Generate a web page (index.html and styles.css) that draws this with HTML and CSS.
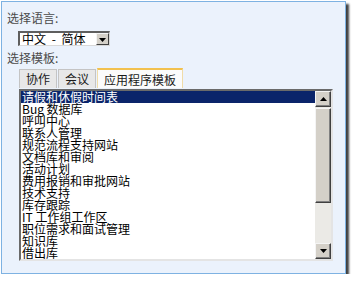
FILE: index.html
```html
<!DOCTYPE html>
<html>
<head>
<meta charset="utf-8">
<link rel="stylesheet" href="styles.css">
</head>
<body>
<div class="frame">
  <div class="label">选择语言:</div>
  <div class="select">
    <span class="select-text">中文 - 简体</span>
    <span class="select-btn"><svg width="7" height="4" viewBox="0 0 7 4"><path d="M0 0H7L3.5 4Z" fill="#000"/></svg></span>
  </div>
  <div class="label label2">选择模板:</div>
  <div class="tabs">
    <div class="tab">协作</div>
    <div class="tab">会议</div>
    <div class="tab active">应用程序模板</div>
  </div>
  <div class="listbox">
    <ul class="items">
      <li class="item selected">请假和休假时间表</li>
      <li class="item">Bug 数据库</li>
      <li class="item">呼叫中心</li>
      <li class="item">联系人管理</li>
      <li class="item">规范流程支持网站</li>
      <li class="item">文档库和审阅</li>
      <li class="item">活动计划</li>
      <li class="item">费用报销和审批网站</li>
      <li class="item">技术支持</li>
      <li class="item">库存跟踪</li>
      <li class="item">IT 工作组工作区</li>
      <li class="item">职位需求和面试管理</li>
      <li class="item">知识库</li>
      <li class="item">借出库</li>
    </ul>
    <div class="scrollbar">
      <div class="sb-btn"><svg width="7" height="4" viewBox="0 0 7 4"><path d="M3.5 0L7 4H0Z" fill="#000"/></svg></div>
      <div class="sb-track"><div class="sb-thumb"></div></div>
      <div class="sb-btn"><svg width="7" height="4" viewBox="0 0 7 4"><path d="M0 0H7L3.5 4Z" fill="#000"/></svg></div>
    </div>
  </div>
</div>
</body>
</html>
```

FILE: styles.css
```css
html, body {
  margin: 0;
  padding: 0;
  background: #ffffff;
}
body {
  font-family: "Noto Sans CJK SC", "Liberation Sans", sans-serif;
  font-size: 12px;
  line-height: 12px;
}
.frame {
  box-sizing: border-box;
  margin: 1px 0 0 1px;
  width: 345px;
  height: 273px;
  border: 1px solid #7eb2e2;
  background: #ebf2fc;
  box-shadow: 3px 3px 2px rgba(0, 0, 0, 0.75);
  padding: 10px 0 0 5px;
}
.label {
  height: 12px;
  color: #4a4a4a;
  white-space: nowrap;
}
.select {
  box-sizing: border-box;
  margin: 7px 0 0 11px;
  width: 92px;
  height: 15px;
  display: flex;
  align-items: stretch;
  background: #fff;
  border-style: solid;
  border-width: 2px 1px 1px 2px;
  border-color: #5e5e5e #d8d8d8 #d8d8d8 #5e5e5e;
}
.select-text {
  flex: 1;
  padding-left: 2px;
  line-height: 12px;
  color: #000;
  word-spacing: 3px;
  white-space: nowrap;
}
.select-btn {
  width: 13px;
  display: flex;
  align-items: center;
  justify-content: center;
  background: #d4d0c8;
  box-sizing: border-box;
  border-style: solid;
  border-width: 1px;
  border-color: #f4f4f4 #404040 #404040 #f4f4f4;
  padding-top: 2px;
}
.label2 {
  margin-top: 6px;
}
.tabs {
  margin: 4px 0 0 12px;
  display: flex;
  align-items: flex-end;
  gap: 1px;
  height: 20px;
}
.tab {
  box-sizing: border-box;
  height: 19px;
  padding: 3px 6px 0;
  background: #e8e8e8;
  border: 1px solid #c4c4c4;
  border-bottom: none;
  color: #1a1a1a;
  white-space: nowrap;
}
.tab.active {
  height: 20px;
  padding-top: 4px;
  background: #fbfbfb;
  border-color: #f0dca8;
  border-top: 2px solid #f2c14e;
}
.listbox {
  box-sizing: border-box;
  margin: 1px 0 0 12px;
  width: 314px;
  height: 172px;
  display: flex;
  background: #fff;
  border-style: solid;
  border-width: 2px;
  border-color: #6a6a6a #e4e4e4 #e4e4e4 #6a6a6a;
  overflow: hidden;
}
.items {
  list-style: none;
  margin: 0;
  padding: 0;
  flex: 1;
  overflow: hidden;
}
.item {
  height: 12px;
  line-height: 12px;
  padding-left: 1px;
  color: #000;
  white-space: nowrap;
}
.item.selected {
  background: #0a246a;
  color: #fff;
}
.scrollbar {
  width: 16px;
  display: flex;
  flex-direction: column;
  background: #ebeae6;
}
.sb-btn {
  box-sizing: border-box;
  height: 16px;
  display: flex;
  align-items: center;
  justify-content: center;
  background: #d4d0c8;
  border-style: solid;
  border-width: 1px;
  border-color: #f4f4f4 #404040 #404040 #f4f4f4;
  box-shadow: inset -1px -1px 0 #808080;
}
.sb-track {
  flex: 1;
  display: flex;
  flex-direction: column;
  padding-top: 1px;
}
.sb-thumb {
  box-sizing: border-box;
  height: 95px;
  background: #d4d0c8;
  border-style: solid;
  border-width: 1px;
  border-color: #f4f4f4 #404040 #404040 #f4f4f4;
  box-shadow: inset -1px -1px 0 #808080;
}
```
